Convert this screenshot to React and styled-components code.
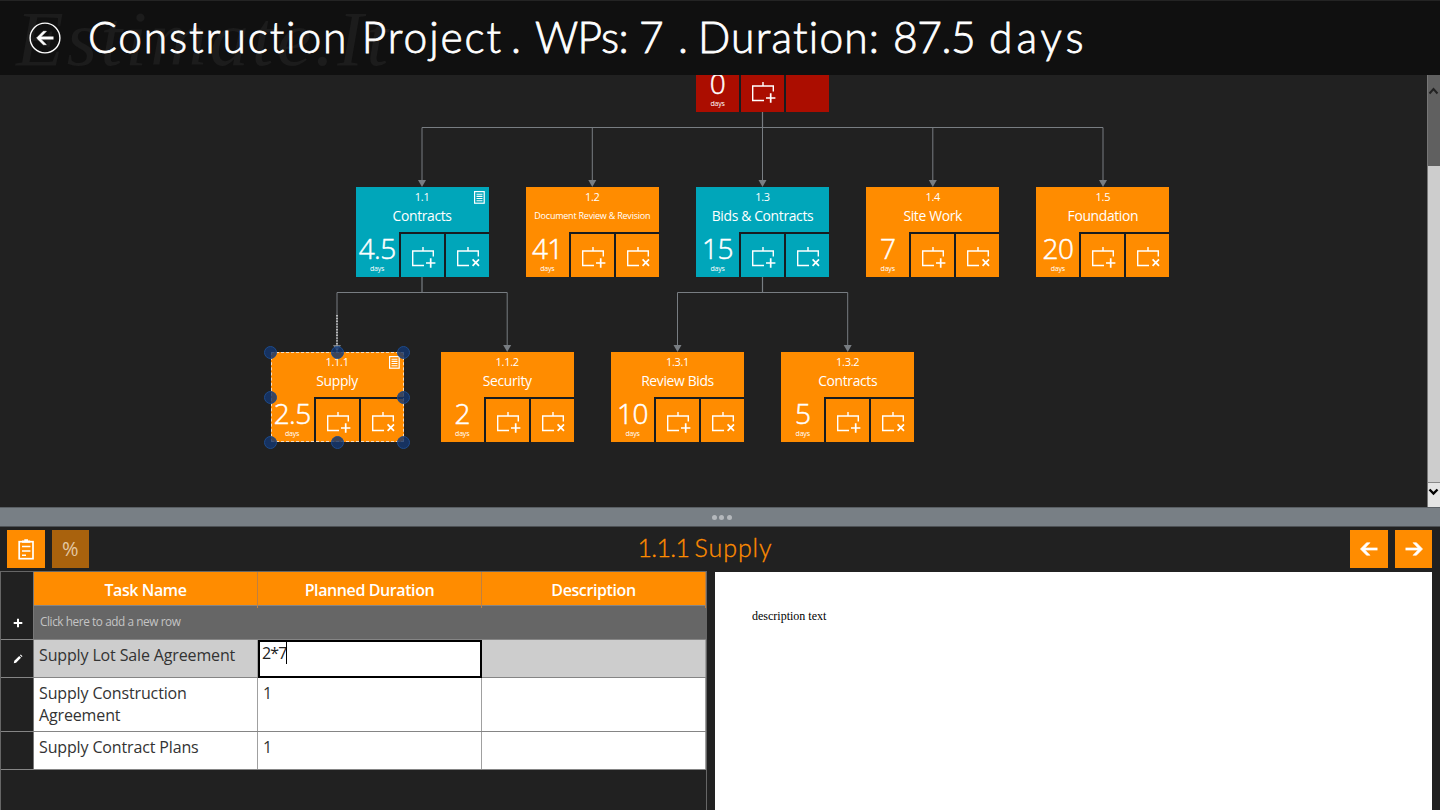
import React, {useState} from 'react';
import styled, {createGlobalStyle} from 'styled-components';

const colors = {
  orange: '#ff8c00',
  teal: '#00a6ba',
  red: '#ab0d00',
  page: '#212121',
  line: '#787d82',
};

const titleWords = [
  {text: 'Construction Project', width: 423, spacing: 1.9},
  {text: '.', width: 24, spacing: 0},
  {text: 'WPs:', width: 104, spacing: -0.6},
  {text: '7', width: 39, spacing: 0},
  {text: '.', width: 20, spacing: 0},
  {text: 'Duration:', width: 195, spacing: 1.2},
  {text: '87.5', width: 96, spacing: -0.4},
  {text: 'days', width: 100, spacing: 4},
];

const treeNodes = [
  {id: '1', days: '0', x: 696, y: -53, color: colors.red, root: true},
  {id: '1.1', name: 'Contracts', days: '4.5', x: 355.6, y: 112.4, color: colors.teal, note: true},
  {id: '1.2', name: 'Document Review & Revision', days: '41', x: 525.8, y: 112.4, color: colors.orange, small: true},
  {id: '1.3', name: 'Bids & Contracts', days: '15', x: 696, y: 112.4, color: colors.teal},
  {id: '1.4', name: 'Site Work', days: '7', x: 866.2, y: 112.4, color: colors.orange},
  {id: '1.5', name: 'Foundation', days: '20', x: 1036.4, y: 112.4, color: colors.orange},
  {id: '1.1.1', name: 'Supply', days: '2.5', x: 270.6, y: 277.4, color: colors.orange, note: true, selected: true},
  {id: '1.1.2', name: 'Security', days: '2', x: 440.7, y: 277.4, color: colors.orange},
  {id: '1.3.1', name: 'Review Bids', days: '10', x: 611, y: 277.4, color: colors.orange},
  {id: '1.3.2', name: 'Contracts', days: '5', x: 781.2, y: 277.4, color: colors.orange},
];

const links = [
  {from: [762.5, 37], mid: 52.5, end: 112, to: [422, 592.3, 762.5, 932.8, 1103]},
  {from: [422, 202], mid: 217.5, end: 277, to: [337, 507.2]},
  {from: [762.5, 202], mid: 217.5, end: 277, to: [677.5, 847.7]},
];

const handles = [[0, 0], [50, 0], [100, 0], [0, 50], [100, 50], [0, 100], [50, 100], [100, 100]];

const columns = ['Task Name', 'Planned Duration', 'Description'];

const tasks = [
  {name: 'Supply Lot Sale Agreement', duration: '2*7', height: 38, editing: true},
  {name: 'Supply Construction Agreement', duration: '1', height: 54},
  {name: 'Supply Contract Plans', duration: '1', height: 38},
];

const AddIcon = () => (
  <svg width="43" height="43" viewBox="0 0 43 43" fill="none" stroke="#fff" strokeWidth="1.4">
    <path d="M23 31.5H11.7V17H32.3V22.5M22 17V13" />
    <path d="M29.7 24.3V33.7M25 29H34.4" strokeWidth="1.7" />
  </svg>
);

const RemoveIcon = () => (
  <svg width="43" height="43" viewBox="0 0 43 43" fill="none" stroke="#fff" strokeWidth="1.4">
    <path d="M23 31.5H11.7V17H32.3V22.5M22 17V13" />
    <path d="M26.6 25.4L33 31.8M33 25.4L26.6 31.8" strokeWidth="1.7" />
  </svg>
);

const NoteIcon = () => (
  <svg width="11" height="13" viewBox="0 0 11 13" fill="none" stroke="#fff">
    <rect x="0.6" y="0.6" width="9.6" height="11.6" strokeWidth="1.2" />
    <path d="M2.5 3.2H8.5M2.5 5.4H8.5M2.5 7.5H8.5M2.5 9.7H8.5" strokeWidth="1.1" />
  </svg>
);

const ArrowIcon = ({flip}) => (
  <svg width="38" height="38" viewBox="0 0 38 38" fill="none" stroke="#fff" strokeWidth="2.7">
    <g transform={flip ? 'translate(38 0) scale(-1 1)' : undefined}>
      <path d="M10.5 19H26" />
      <path d="M18 12.7H21.4L27.6 19L21.4 25.3H18L24 19Z" fill="#fff" strokeWidth="0.6" />
    </g>
  </svg>
);

const TreeNode = ({node}) => (
  <NodeBox style={{left: node.x, top: node.y}}>
    <NodeHead $color={node.color}>
      {!node.root && <NodeCode>{node.id}</NodeCode>}
      {node.name && <NodeName $small={node.small}>{node.name}</NodeName>}
      {node.note && <NoteMark><NoteIcon /></NoteMark>}
    </NodeHead>
    <NodeFoot>
      <DaysBox $color={node.color}>
        <DaysValue>{node.days}</DaysValue>
        <DaysLabel>days</DaysLabel>
      </DaysBox>
      <NodeButton $color={node.color}><AddIcon /></NodeButton>
      <NodeButton $color={node.color}>{!node.root && <RemoveIcon />}</NodeButton>
    </NodeFoot>
    {node.selected && (
      <Selection>
        {handles.map(([left, top], i) => (
          <Handle key={`handle_${i}`} style={{left: `${left}%`, top: `${top}%`}} />
        ))}
      </Selection>
    )}
  </NodeBox>
);

const App = () => {
  const [selected] = useState(treeNodes.find((v) => v.selected));

  return (
    <Page>
      <GlobalStyle />
      <Header>
        <Watermark>Estimate.It</Watermark>
        <BackButton>
          <svg width="32" height="32" viewBox="0 0 32 32" fill="none" stroke="#fff">
            <circle cx="16" cy="16" r="14.9" strokeWidth="1.4" />
            <path d="M9 16H24.5" strokeWidth="3" />
            <path d="M14.3 9.3H17.4L10.7 16L17.4 22.7H14.3L7.6 16Z" fill="#fff" strokeWidth="0.6" />
          </svg>
        </BackButton>
        <Title>
          {titleWords.map((v, i) => (
            <TitleWord key={`word_${i}`} $width={v.width} $spacing={v.spacing}>{v.text}</TitleWord>
          ))}
        </Title>
      </Header>

      <Canvas>
        <Links width="1427" height="432" viewBox="0 0 1427 432">
          {links.map((link, i) => (
            <g key={`link_${i}`}>
              <path
                d={`M${link.from[0]} ${link.from[1]}V${link.mid}M${link.to[0]} ${link.mid}H${link.to[link.to.length - 1]}`}
                stroke={colors.line}
                strokeWidth="1.2"
              />
              {link.to.map((x) => (
                <g key={x}>
                  <path d={`M${x} ${link.mid}V${link.end - 6}`} stroke={colors.line} strokeWidth="1" />
                  <path d={`M${x - 4} ${link.end - 7}H${x + 4}L${x} ${link.end}Z`} fill={colors.line} />
                </g>
              ))}
            </g>
          ))}
          <path d="M337 240V277" stroke="#fff" strokeWidth="1.2" strokeDasharray="1.4 1.4" />
        </Links>
        {treeNodes.map((node) => <TreeNode key={node.id} node={node} />)}
        <ScrollBar>
          <ScrollTrack>
            <svg width="11" height="8" viewBox="0 0 11 8" fill="none" stroke="#222" strokeWidth="2">
              <path d="M1.5 6.5L5.5 2L9.5 6.5" />
            </svg>
          </ScrollTrack>
          <ScrollThumb />
          <ScrollDown>
            <svg width="11" height="8" viewBox="0 0 11 8" fill="none" stroke="#000" strokeWidth="2.4">
              <path d="M1.5 1.5L5.5 5.5L9.5 1.5" />
            </svg>
          </ScrollDown>
        </ScrollBar>
      </Canvas>

      <Splitter><i /><i /><i /></Splitter>

      <Toolbar>
        <ToolButton>
          <svg width="38" height="38" viewBox="0 0 38 38" fill="none" stroke="#fff">
            <rect x="12.2" y="11.7" width="13.8" height="17" strokeWidth="1.7" />
            <path d="M15 12.8V10.4H17.3V9.2H21V10.4H23.2V12.8Z" fill="#fff" stroke="none" />
            <path d="M15 16.5H23.4M15 21H23.4M15 25.3H19" strokeWidth="1.6" />
          </svg>
        </ToolButton>
        <ToolButton $dim>%</ToolButton>
        <PanelTitle>
          <PanelCode>{selected.id}</PanelCode>
          <span>{selected.name}</span>
        </PanelTitle>
        <ToolButton><ArrowIcon flip /></ToolButton>
        <ToolButton><ArrowIcon /></ToolButton>
      </Toolbar>

      <Panels>
        <Grid>
          <HeadRow>
            <Marker />
            {columns.map((v) => <HeadCell key={v}>{v}</HeadCell>)}
          </HeadRow>
          <NewRow>
            <Marker>
              <svg width="10" height="10" viewBox="0 0 10 10" stroke="#fff" strokeWidth="2">
                <path d="M5 0.7V9.3M0.7 5H9.3" />
              </svg>
            </Marker>
            <NewRowText>Click here to add a new row</NewRowText>
          </NewRow>
          {tasks.map((task) => (
            <TaskRow key={task.name} $height={task.height} $active={task.editing}>
              <Marker>
                {task.editing && (
                  <svg width="10" height="10" viewBox="0 0 10 10" fill="#fff">
                    <path d="M0.8 9.2L1.3 6.8L6.2 2L8 3.8L3.1 8.7ZM6.9 1.3L7.8 0.5L9.5 2.2L8.7 3.1Z" />
                  </svg>
                )}
              </Marker>
              <Cell>{task.name}</Cell>
              {task.editing ? <EditCell>{task.duration}<Caret /></EditCell> : <Cell>{task.duration}</Cell>}
              <Cell />
            </TaskRow>
          ))}
        </Grid>
        <DescriptionPane>description text</DescriptionPane>
      </Panels>
    </Page>
  );
};

const GlobalStyle = createGlobalStyle`
  * {
    box-sizing: border-box;
  }
  body {
    margin: 0;
    overflow: hidden;
    background: ${colors.page};
    font-family: 'Open Sans', 'Noto Sans', sans-serif;
  }
  svg {
    display: block;
  }
`;

const Page = styled.div`
  width: 1440px;
  height: 810px;
  display: flex;
  flex-direction: column;
  overflow: hidden;
  background: ${colors.page};
`;

const Header = styled.header`
  position: relative;
  z-index: 1;
  flex: 0 0 75px;
  display: flex;
  align-items: center;
  padding-left: 29px;
  border-top: 1px solid #242424;
  background: #101010;
  overflow: hidden;
`;

const Watermark = styled.div`
  position: absolute;
  left: 16px;
  top: -4px;
  font: italic 78px/84px 'Liberation Serif', serif;
  letter-spacing: 3.2px;
  color: #1c1c1c;
`;

const BackButton = styled.div`
  position: relative;
  width: 32px;
  height: 32px;
`;

const Title = styled.h1`
  position: relative;
  display: flex;
  margin: 0 0 3px 27px;
  font-family: Lato, sans-serif;
  font-size: 42.5px;
  font-weight: 300;
  line-height: 50px;
  white-space: nowrap;
  color: #fff;
  -webkit-text-stroke: 0.8px #fff;
`;

const TitleWord = styled.span`
  width: ${({$width}) => $width}px;
  letter-spacing: ${({$spacing}) => $spacing}px;
`;

const Canvas = styled.main`
  position: relative;
  flex: 0 0 432px;
  display: flex;
  justify-content: flex-end;
  overflow: hidden;
`;

const Links = styled.svg`
  position: absolute;
  left: 0;
  top: 0;
  fill: none;
`;

const NodeBox = styled.div`
  position: absolute;
  width: 133px;
  height: 90px;
  display: flex;
  flex-direction: column;
  background: #181c20;
  color: #fff;
`;

const NodeHead = styled.div`
  position: relative;
  height: 45px;
  display: flex;
  flex-direction: column;
  align-items: center;
  background: ${({$color}) => $color};
`;

const NodeCode = styled.div`
  height: 18px;
  font-size: 11px;
  line-height: 19px;
  letter-spacing: -0.3px;
`;

const NodeName = styled.div`
  font-size: ${({$small}) => ($small ? '9px' : '13.9px')};
  line-height: 22px;
  letter-spacing: ${({$small}) => ($small ? '-0.22px' : '-0.35px')};
  white-space: nowrap;
`;

const NoteMark = styled.div`
  position: absolute;
  right: 4px;
  top: 4px;
`;

const NodeFoot = styled.div`
  flex: 1;
  display: flex;
  align-items: flex-end;
  gap: 2px;
`;

const DaysBox = styled.div`
  width: 43px;
  height: 45px;
  display: flex;
  flex-direction: column;
  align-items: center;
  background: ${({$color}) => $color};
`;

const DaysValue = styled.div`
  height: 32px;
  font-size: 28px;
  font-weight: 300;
  line-height: 33px;
  letter-spacing: -0.6px;
  -webkit-text-stroke: 0.5px #fff;
`;

const DaysLabel = styled.div`
  font-size: 7px;
  line-height: 10px;
  letter-spacing: -0.2px;
`;

const NodeButton = styled.div`
  width: 43px;
  height: 43px;
  background: ${({$color}) => $color};
`;

const Selection = styled.div`
  position: absolute;
  inset: 0;
  outline: 1px dashed #f5dcc0;
  outline-offset: -1px;
`;

const Handle = styled.span`
  position: absolute;
  width: 13px;
  height: 13px;
  margin: -6.5px 0 0 -6.5px;
  border: 1px solid #1d4b8c;
  border-radius: 50%;
  background: rgba(20, 54, 110, 0.82);
`;

const ScrollBar = styled.div`
  width: 13px;
  display: flex;
  flex-direction: column;
  border-left: 1px solid #777;
  background: #cdcdcd;
`;

const ScrollTrack = styled.div`
  height: 91px;
  padding-top: 12px;
  background: #606060;
`;

const ScrollThumb = styled.div`
  flex: 1;
  background: #cdcdcd;
`;

const ScrollDown = styled.div`
  height: 25px;
  padding-top: 5px;
  border-top: 1px solid #888;
  background: #e4e4e4;
`;

const Splitter = styled.div`
  flex: 0 0 20px;
  display: flex;
  align-items: center;
  justify-content: center;
  gap: 2.5px;
  padding-left: 3px;
  border-top: 1px solid #5a5f64;
  border-bottom: 1px solid #4c5054;
  background: #787f85;
  i {
    width: 5px;
    height: 5px;
    border-radius: 50%;
    background: #b4b8bc;
  }
`;

const Toolbar = styled.div`
  flex: 0 0 44px;
  display: flex;
  align-items: flex-start;
  gap: 7px;
  padding: 3px 8px 0 7px;
`;

const ToolButton = styled.div`
  width: 37.5px;
  height: 38px;
  background: ${({$dim}) => ($dim ? '#a9620d' : colors.orange)};
  color: #e3c7a3;
  font-size: 20px;
  line-height: 38px;
  text-align: center;
`;

const PanelTitle = styled.h2`
  flex: 1;
  display: flex;
  justify-content: center;
  margin: 0;
  padding-right: 29px;
  font-family: Lato, sans-serif;
  font-size: 25px;
  font-weight: 300;
  line-height: 34px;
  letter-spacing: 0.9px;
  color: ${colors.orange};
  -webkit-text-stroke: 0.3px ${colors.orange};
`;

const PanelCode = styled.span`
  width: 57px;
  letter-spacing: -0.7px;
`;

const Panels = styled.div`
  flex: 1;
  display: flex;
  gap: 8px;
  padding-right: 8px;
`;

const Grid = styled.div`
  width: 707px;
  border-top: 1px solid #666;
  border-right: 1px solid #666;
  border-left: 1px solid #666;
`;

const Row = styled.div`
  display: grid;
  grid-template-columns: 33px 224px 224px 1fr;
  border-bottom: 1px solid #858585;
`;

const Marker = styled.div`
  display: flex;
  align-items: center;
  justify-content: center;
  padding-left: 1px;
  border-right: 1px solid #777;
  background: ${colors.page};
`;

const HeadRow = styled(Row)`
  height: 34px;
  background: ${colors.orange};
`;

const HeadCell = styled.div`
  border-right: 1px solid #c08040;
  font-size: 16px;
  font-weight: 600;
  line-height: 36px;
  letter-spacing: -0.4px;
  text-align: center;
  color: #fff;
`;

const NewRow = styled(Row)`
  height: 34px;
  background: #666;
`;

const NewRowText = styled.div`
  grid-column: 2 / -1;
  padding-left: 6px;
  font-size: 11.8px;
  line-height: 31px;
  letter-spacing: -0.42px;
  color: #c4c4c4;
`;

const TaskRow = styled(Row)`
  height: ${({$height}) => $height}px;
  background: ${({$active}) => ($active ? '#cdcdcd' : '#fff')};
`;

const Cell = styled.div`
  padding: 4px 5px 0;
  border-right: 1px solid #a0a0a0;
  font-size: 16px;
  line-height: 22px;
  letter-spacing: -0.14px;
  color: #333;
`;

const EditCell = styled.div`
  display: flex;
  align-items: flex-start;
  margin-bottom: -1px;
  padding: 0 2px;
  border: 2px solid #000;
  background: #fff;
  font-size: 16px;
  line-height: 22px;
  letter-spacing: -0.9px;
  color: #222;
`;

const Caret = styled.span`
  width: 1px;
  height: 22px;
  background: #000;
`;

const DescriptionPane = styled.div`
  flex: 1;
  margin-top: 1px;
  padding: 36px 37px;
  background: #fff;
  font: 12px/16px 'Liberation Serif', serif;
  color: #000;
`;

export default App;
